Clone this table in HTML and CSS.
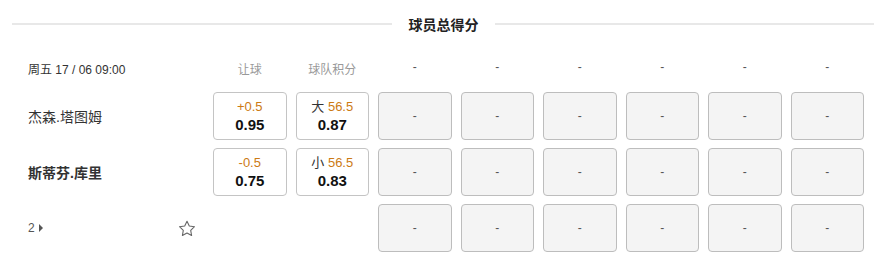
FILE: index.html
```html
<!DOCTYPE html>
<html lang="zh-CN">
<head>
    <meta charset="UTF-8">
    <meta name="viewport" content="width=device-width, initial-scale=1.0">
    <title>球员总得分</title>
    <link rel="stylesheet" href="styles.css">
</head>
<body>
    <section class="market">
        <header class="market-title">
            <span class="line"></span>
            <h2 class="title">球员总得分</h2>
            <span class="line"></span>
        </header>

        <div class="row head-row">
            <div class="side">
                <span class="date">周五 17 / 06 09:00</span>
            </div>
            <div class="cells">
                <span class="col-head">让球</span>
                <span class="col-head">球队积分</span>
                <span class="col-head dash">-</span>
                <span class="col-head dash">-</span>
                <span class="col-head dash">-</span>
                <span class="col-head dash">-</span>
                <span class="col-head dash">-</span>
                <span class="col-head dash">-</span>
            </div>
        </div>

        <div class="rows">
            <div class="row">
                <div class="side">
                    <span class="team">杰森.塔图姆</span>
                </div>
                <div class="cells">
                    <button class="odd">
                        <span class="line-val">+0.5</span>
                        <span class="price">0.95</span>
                    </button>
                    <button class="odd">
                        <span class="line-val"><em>大</em> 56.5</span>
                        <span class="price">0.87</span>
                    </button>
                    <button class="odd empty">-</button>
                    <button class="odd empty">-</button>
                    <button class="odd empty">-</button>
                    <button class="odd empty">-</button>
                    <button class="odd empty">-</button>
                    <button class="odd empty">-</button>
                </div>
            </div>

            <div class="row">
                <div class="side">
                    <span class="team strong">斯蒂芬.库里</span>
                </div>
                <div class="cells">
                    <button class="odd">
                        <span class="line-val">-0.5</span>
                        <span class="price">0.75</span>
                    </button>
                    <button class="odd">
                        <span class="line-val"><em>小</em> 56.5</span>
                        <span class="price">0.83</span>
                    </button>
                    <button class="odd empty">-</button>
                    <button class="odd empty">-</button>
                    <button class="odd empty">-</button>
                    <button class="odd empty">-</button>
                    <button class="odd empty">-</button>
                    <button class="odd empty">-</button>
                </div>
            </div>

            <div class="row">
                <div class="side">
                    <span class="more">2 <i class="caret"></i></span>
                    <button class="fav" aria-label="收藏">
                        <svg width="18" height="17" viewBox="0 0 18 17">
                            <path d="M9 1.2l2.3 4.8 5.2.7-3.8 3.6.9 5.2L9 13l-4.6 2.5.9-5.2L1.5 6.7l5.2-.7z"
                                  fill="none" stroke="#666" stroke-width="1.1" stroke-linejoin="round"/>
                        </svg>
                    </button>
                </div>
                <div class="cells">
                    <span class="blank"></span>
                    <span class="blank"></span>
                    <button class="odd empty">-</button>
                    <button class="odd empty">-</button>
                    <button class="odd empty">-</button>
                    <button class="odd empty">-</button>
                    <button class="odd empty">-</button>
                    <button class="odd empty">-</button>
                </div>
            </div>
        </div>
    </section>
</body>
</html>
```

FILE: styles.css
```css
:root {
    --text: #333333;
    --muted: #999999;
    --accent: #cc7a14;
    --border: #c4c4c4;
    --empty-bg: #f4f4f4;
}

body {
    margin: 0;
    background: #ffffff;
    color: var(--text);
    font-family: "Liberation Sans", Arial, "Noto Sans CJK SC", sans-serif;
}

/* title with rules on both sides */
.market-title {
    display: flex;
    align-items: center;
    height: 48px;
    padding: 0 10px 0 12px;
}

.line {
    flex: 1;
    height: 2px;
    background: #e8e8e8;
}

.title {
    margin: 0;
    padding: 0 16px 0 17px;
    font-size: 14px;
    font-weight: bold;
    color: #222222;
}

.row {
    display: flex;
    height: 48px;
    padding-right: 20px;
}

.head-row {
    height: 40px;
    align-items: center;
}

.rows {
    display: flex;
    flex-direction: column;
    gap: 8px;
    padding-top: 4px;
}

.side {
    display: flex;
    align-items: center;
    justify-content: space-between;
    width: 213px;
    box-sizing: border-box;
    padding: 0 17px 0 28px;
}

.cells {
    flex: 1;
    display: grid;
    grid-template-columns: repeat(8, 1fr);
    gap: 9px;
}

.date {
    font-size: 12px;
    color: var(--text);
}

.col-head {
    text-align: center;
    font-size: 12px;
    color: var(--muted);
}

.col-head.dash {
    color: #555555;
}

.team {
    font-size: 14px;
}

.team.strong {
    font-weight: bold;
}

.more {
    display: flex;
    align-items: center;
    gap: 4px;
    font-size: 12px;
    color: #555555;
}

.caret {
    width: 0;
    height: 0;
    border-top: 4px solid transparent;
    border-bottom: 4px solid transparent;
    border-left: 4px solid #555555;
}

.fav {
    display: flex;
    padding: 0;
    background: none;
    border: none;
    cursor: pointer;
}

.odd {
    display: flex;
    flex-direction: column;
    align-items: center;
    justify-content: center;
    margin: 0;
    padding: 0;
    background: #ffffff;
    border: 1px solid var(--border);
    border-radius: 4px;
    font-family: inherit;
    color: var(--text);
    cursor: pointer;
}

.odd.empty {
    background: var(--empty-bg);
    border-color: #bdbdbd;
    font-size: 12px;
    color: #555555;
}

.line-val {
    font-size: 13px;
    line-height: 18px;
    color: var(--accent);
}

.line-val em {
    font-style: normal;
    color: var(--text);
}

.price {
    font-size: 15px;
    line-height: 18px;
    font-weight: bold;
    color: #111111;
}
```
